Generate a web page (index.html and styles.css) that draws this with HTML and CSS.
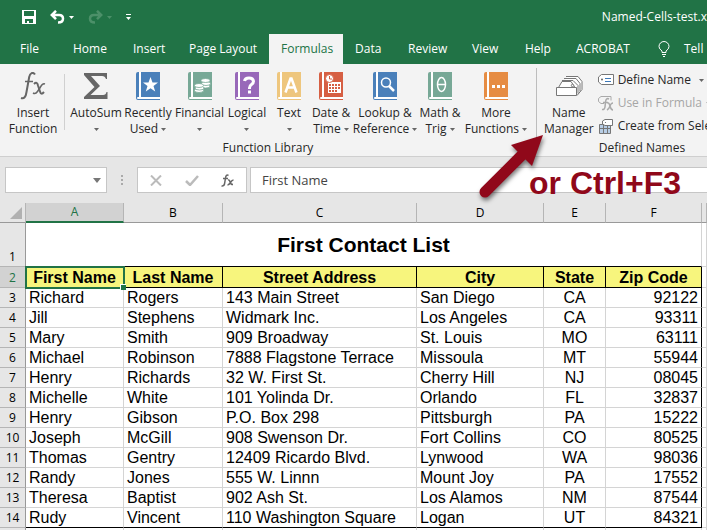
FILE: index.html
```html
<!DOCTYPE html>
<html lang="en">
<head>
<meta charset="utf-8">
<title>Named Cells</title>
<link rel="stylesheet" href="styles.css">
</head>
<body>
<svg class="defs" aria-hidden="true">
  <symbol id="book" viewBox="0 0 24 28">
    <path fill="#fff" d="M1 24h23v3H1z"/>
    <path fill="currentColor" d="M2 0h1v25H2q-1 0-1 1t1 1h22v1H2q-2 0-2-2V2q0-2 2-2zM5 0h19v25H5z"/>
    <path fill="#fff" d="M3 0h2v25H3z"/>
  </symbol>
  <symbol id="caret" viewBox="0 0 5 3"><path fill="currentColor" d="M0 0h5L2.500 3z"/></symbol>
</svg>
<div class="window">
  <header class="titlebar">
    <div class="quick">
      <button aria-label="Save"><svg width="14" height="14" viewBox="0 0 14 14"><path fill="#fff" fill-rule="evenodd" d="M0 0h14v14H0zM2 1v5h10V1zM3 9v4h2v-2h2v2h4V9z"/></svg></button>
      <button class="undo" aria-label="Undo"><svg width="15" height="14" viewBox="0 0 15 14"><path fill="none" stroke="#fff" stroke-width="2.500" d="M6 .8 1.800 5 6 9.200M2 5h7q4 0 4 3.800T8 12.500"/></svg><svg class="caret" width="5" height="3"><use href="#caret"/></svg></button>
      <button class="redo" aria-label="Redo" disabled><svg width="15" height="14" viewBox="0 0 15 14"><path fill="none" stroke="currentColor" stroke-width="2.500" d="M9 .8 13.200 5 9 9.200M13 5H6Q2 5 2 8.800T7 12.500"/></svg><svg class="caret" width="5" height="3"><use href="#caret"/></svg></button>
      <button aria-label="Customize Quick Access Toolbar"><svg width="5" height="6" viewBox="0 0 5 6"><path fill="#fff" d="M0 0h5v1H0zM0 3h5L2.500 6z"/></svg></button>
    </div>
    <span class="filename">Named-Cells-test.x</span>
  </header>
  <nav class="tabs">
    <a href="#">File</a><a href="#">Home</a><a href="#">Insert</a><a href="#">Page Layout</a><a href="#" class="active">Formulas</a><a href="#">Data</a><a href="#">Review</a><a href="#">View</a><a href="#">Help</a><a href="#">ACROBAT</a>
    <a href="#" class="tell"><svg width="12" height="16" viewBox="0 0 12 16"><path fill="none" stroke="#fff" d="M4 11.500V10Q1 8 1 5.500a5 5 0 0 1 10 0Q11 8 8 10v1.500zM4 13.500h4M5 15.500h2"/></svg>Tell</a>
  </nav>
  <section class="ribbon">
    <div class="group insert">
      <button class="tool"><svg width="26" height="28" viewBox="0 0 26 28"><g fill="none" stroke="#666"><path stroke-width="2" d="M15 2.500C13-.5 10 1 9.200 5L6.500 20Q5.500 27.500 1 26"/><path stroke-width="1.500" d="M5 9.500h8"/><path stroke-width="2" d="M14 12q3-3 4 1.500l2 6q1 4 4 .5"/><path stroke-width="1.500" d="M25 12q-2.500-1-4.500 3l-3 4.500q-2 3-4.500 1.500"/></g></svg><span>Insert<br>Function</span></button>
    </div>
    <div class="group library">
      <div class="tools">
        <button class="tool"><svg width="26" height="28" viewBox="0 0 26 28"><path fill="#666" d="M1 1h23v6h-1q-1-3-4-3H8l9 10-9.500 9H20q3 0 3.500-3h1v7H1v-2l10.500-10L1 3z"/></svg><span>AutoSum<br><svg class="caret" width="5" height="3"><use href="#caret"/></svg></span></button>
        <button class="tool blue"><svg width="24" height="28" viewBox="0 0 24 28"><use href="#book"/><path fill="#fff" d="m14.500 5 2 5.500h5.500l-4.500 3.500 1.700 5.500-4.700-3.300L9.800 19.500l1.700-5.500L7 10.500h5.500z"/></svg><span>Recently<br>Used <svg class="caret" width="5" height="3"><use href="#caret"/></svg></span></button>
        <button class="tool green"><svg width="24" height="28" viewBox="0 0 24 28"><use href="#book"/><g fill="#fff" stroke="#77a896" stroke-width=".8"><ellipse cx="17.500" cy="14" rx="4.500" ry="2"/><ellipse cx="18" cy="11.500" rx="4.500" ry="2"/><ellipse cx="17.500" cy="8.500" rx="4.500" ry="2"/><ellipse cx="11" cy="18.500" rx="4.500" ry="2"/><ellipse cx="11.500" cy="16" rx="4.500" ry="2"/><ellipse cx="11" cy="13.500" rx="4.500" ry="2"/></g></svg><span>Financial<br><svg class="caret" width="5" height="3"><use href="#caret"/></svg></span></button>
        <button class="tool purple"><svg width="24" height="28" viewBox="0 0 24 28"><use href="#book"/><path fill="none" stroke="#fff" stroke-width="3" d="M9.500 9Q10 6 14 6t4.500 3.200q0 2-2 3.300T14.500 16v1"/><path fill="#fff" d="M13 18.500h3v3h-3z"/></svg><span>Logical<br><svg class="caret" width="5" height="3"><use href="#caret"/></svg></span></button>
        <button class="tool gold"><svg width="24" height="28" viewBox="0 0 24 28"><use href="#book"/><path fill="none" stroke="#fff" stroke-width="2.500" d="m8.500 20.500 5-14h1l5 14M10 15.500h8"/></svg><span>Text<br><svg class="caret" width="5" height="3"><use href="#caret"/></svg></span></button>
        <button class="tool red"><svg width="24" height="28" viewBox="0 0 24 28"><use href="#book"/><path fill="#fff" d="M9 10h13v11H9z"/><path fill="#d65f43" d="M10 12h2v2h-2zm3 0h2v2h-2zm3 0h2v2h-2zm3 0h2v2h-2zM10 15h2v2h-2zm3 0h2v2h-2zm3 0h2v2h-2zm3 0h2v2h-2zM10 18h2v2h-2zm3 0h2v2h-2zm3 0h2v2h-2z"/><circle cx="10.500" cy="6.500" r="4" fill="#fff" stroke="#d65f43"/><path stroke="#d65f43" fill="none" d="M10.500 4v3H13"/></svg><span>Date &amp;<br>Time <svg class="caret" width="5" height="3"><use href="#caret"/></svg></span></button>
        <button class="tool blue"><svg width="24" height="28" viewBox="0 0 24 28"><use href="#book"/><g fill="none" stroke="#fff"><circle cx="13" cy="10.500" r="4.500" stroke-width="1.500"/><path stroke-width="2.500" d="m16 14 5 5"/></g></svg><span>Lookup &amp;<br>Reference <svg class="caret" width="5" height="3"><use href="#caret"/></svg></span></button>
        <button class="tool green"><svg width="24" height="28" viewBox="0 0 24 28"><use href="#book"/><g fill="none" stroke="#fff" stroke-width="1.500"><ellipse cx="13.500" cy="12.500" rx="4" ry="7"/><path d="M9.500 12.500h8"/></g></svg><span>Math &amp;<br>Trig <svg class="caret" width="5" height="3"><use href="#caret"/></svg></span></button>
        <button class="tool orange"><svg width="24" height="28" viewBox="0 0 24 28"><use href="#book"/><path fill="#fff" d="M8 13h3v3H8zm5 0h3v3h-3zm5 0h3v3h-3z"/></svg><span>More<br>Functions <svg class="caret" width="5" height="3"><use href="#caret"/></svg></span></button>
      </div>
      <div class="caption">Function Library</div>
    </div>
    <div class="group names">
      <div class="tools">
        <button class="tool"><svg width="28" height="28" viewBox="0 0 28 28"><g fill="#fff" stroke="#777"><path d="M11 4.500h12l4 5v8l-5 6"/><path d="M9 6.500h12l4 5v8"/><path d="M7 8.500h11l5 5v8"/><path d="M3.500 15.500 7 9.500h9l4 6"/><circle cx="17.500" cy="13.500" r="1.200"/><path d="M1.500 15.500h20v8h-20z"/></g></svg><span>Name<br>Manager</span></button>
        <div class="commands">
          <button><svg width="16" height="12" viewBox="0 0 16 12"><path fill="#fff" stroke="#777" d="M3.500.5h12v10h-12L.5 8V3z"/><circle cx="4" cy="5.500" r="1" fill="#666"/><path stroke="#3d78b8" d="M7 4.500h6M7 7.500h6"/></svg>Define Name<svg class="caret far" width="5" height="3"><use href="#caret"/></svg></button>
          <button disabled><svg width="16" height="15" viewBox="0 0 16 15"><g fill="none" stroke="#aaa"><path d="M6 7.500H3L.5 5.500v-3L3 .5h10v4"/><path stroke-width="1.500" d="M11 3Q8 1.500 7.500 6L7 11q-.5 3-3 2.500M5 6.500h5M9 7q2-1 3 3t3 4M15 7q-2 0-3 3t-3 4"/></g></svg>Use in Formula<svg class="caret" width="5" height="3"><use href="#caret"/></svg></button>
          <button><svg width="16" height="15" viewBox="0 0 16 15"><path fill="#b8cee6" stroke="#777" d="M1.500 5.500h11v9h-11zM1.500 9.500h11M5.500 5.500v9M9.500 5.500v9"/><path fill="#fff" stroke="#777" d="M7 .5h7.500v6H7L4.500 5V2z"/><circle cx="7.500" cy="3.500" r=".6" fill="#666"/></svg>Create from Sele</button>
        </div>
      </div>
      <div class="caption">Defined Names</div>
    </div>
  </section>
  <section class="formulabar">
    <div class="namebox"><input aria-label="Name Box"><svg width="8" height="5" viewBox="0 0 8 5"><path fill="currentColor" d="M0 0h8L4 5z"/></svg></div>
    <svg class="grip" width="2" height="10" viewBox="0 0 2 10"><path fill="#aaa" d="M0 0h2v2H0zM0 4h2v2H0zM0 8h2v2H0z"/></svg>
    <div class="actions">
      <button aria-label="Cancel"><svg width="12" height="11" viewBox="0 0 12 11"><path stroke="#bbb" stroke-width="2" d="m1 .5 10 10M11 .5l-10 10"/></svg></button>
      <button aria-label="Enter"><svg width="14" height="11" viewBox="0 0 14 11"><path fill="none" stroke="#bbb" stroke-width="2.500" d="m1 6 4 4 8-9"/></svg></button>
      <button aria-label="Insert Function"><svg width="13" height="13" viewBox="0 0 13 13"><g fill="none" stroke="#666" stroke-width="1.500"><path d="M7.500 1.500Q5 0 4.500 4L3.500 10Q3 12.500.5 12M2 4.500h5M7 6q1.500-.5 2 2t3 2.500M12.500 6Q11 6 9.500 8.500T6.500 11"/></g></svg></button>
    </div>
    <input class="formula" aria-label="Formula Bar" value="First Name">
  </section>
  <table class="sheet">
    <colgroup><col class="w-row"><col class="w-a"><col class="w-b"><col class="w-c"><col class="w-d"><col class="w-e"><col class="w-f"><col></colgroup>
    <thead><tr><th class="corner"><svg width="12" height="12" viewBox="0 0 12 12"><path fill="#b1b1b1" d="M12 0v12H0z"/></svg></th><th class="selected">A</th><th>B</th><th>C</th><th>D</th><th>E</th><th>F</th><th></th></tr></thead>
    <tbody>
      <tr class="title"><th>1</th><td colspan="6">First Contact List</td><td></td></tr>
      <tr class="fields"><th class="selected">2</th><td class="current">First Name<i class="handle"></i></td><td>Last Name</td><td>Street Address</td><td>City</td><td>State</td><td>Zip Code</td><td></td></tr>
      <tr><th>3</th><td>Richard</td><td>Rogers</td><td>143 Main Street</td><td>San Diego</td><td>CA</td><td>92122</td><td></td></tr>
      <tr><th>4</th><td>Jill</td><td>Stephens</td><td>Widmark Inc.</td><td>Los Angeles</td><td>CA</td><td>93311</td><td></td></tr>
      <tr><th>5</th><td>Mary</td><td>Smith</td><td>909 Broadway</td><td>St. Louis</td><td>MO</td><td>63111</td><td></td></tr>
      <tr><th>6</th><td>Michael</td><td>Robinson</td><td>7888 Flagstone Terrace</td><td>Missoula</td><td>MT</td><td>55944</td><td></td></tr>
      <tr><th>7</th><td>Henry</td><td>Richards</td><td>32 W. First St.</td><td>Cherry Hill</td><td>NJ</td><td>08045</td><td></td></tr>
      <tr><th>8</th><td>Michelle</td><td>White</td><td>101 Yolinda Dr.</td><td>Orlando</td><td>FL</td><td>32837</td><td></td></tr>
      <tr><th>9</th><td>Henry</td><td>Gibson</td><td>P.O. Box 298</td><td>Pittsburgh</td><td>PA</td><td>15222</td><td></td></tr>
      <tr><th>10</th><td>Joseph</td><td>McGill</td><td>908 Swenson Dr.</td><td>Fort Collins</td><td>CO</td><td>80525</td><td></td></tr>
      <tr><th>11</th><td>Thomas</td><td>Gentry</td><td>12409 Ricardo Blvd.</td><td>Lynwood</td><td>WA</td><td>98036</td><td></td></tr>
      <tr><th>12</th><td>Randy</td><td>Jones</td><td>555 W. Linnn</td><td>Mount Joy</td><td>PA</td><td>17552</td><td></td></tr>
      <tr><th>13</th><td>Theresa</td><td>Baptist</td><td>902 Ash St.</td><td>Los Alamos</td><td>NM</td><td>87544</td><td></td></tr>
      <tr class="last"><th>14</th><td>Rudy</td><td>Vincent</td><td>110 Washington Square</td><td>Logan</td><td>UT</td><td>84321</td><td></td></tr>
      <tr class="blank"><th></th><td></td><td></td><td></td><td></td><td></td><td></td><td></td></tr>
    </tbody>
  </table>
  <div class="callout">
    <svg width="72" height="72" viewBox="0 0 72 72"><path stroke="#90081a" stroke-width="11" stroke-linecap="round" d="M10 62 50 22"/><path fill="#90081a" d="M68 5 36 15l21 21z"/></svg>
    <strong>or Ctrl+F3</strong>
  </div>
</div>
</body>
</html>
```

FILE: styles.css
```css
* { box-sizing: border-box; }
html, body { height: 100%; }
body {
  margin: 0;
  overflow: hidden;
  background: #fff;
  color: #262626;
  font: 12px/16px "Open Sans", "Noto Sans", sans-serif;
}
button {
  margin: 0;
  padding: 0;
  border: 0;
  background: none;
  color: inherit;
  font: inherit;
}
input { font: inherit; color: #444; }
svg { display: block; flex: none; }
.defs { position: absolute; width: 0; height: 0; }
.window { position: relative; height: 100%; overflow: hidden; }
.caret { color: #666; }

.titlebar {
  display: flex;
  justify-content: space-between;
  align-items: center;
  height: 34px;
  padding-left: 22px;
  background: #217346;
  color: #fff;
}
.quick { display: flex; align-items: center; gap: 14px; }
.quick button { display: flex; align-items: center; gap: 4px; }
.quick .caret { color: inherit; }
.quick .undo { color: #fff; }
.quick .redo { color: #4c9069; }
.filename { flex: none; white-space: nowrap; }

.tabs {
  display: grid;
  grid-template-columns: 53px 60px 56px 92px 74px 53px 64px 53px 51px 82px 1fr;
  height: 30px;
  padding-left: 8px;
  background: #217346;
}
.tabs a {
  padding-left: 12px;
  color: #fff;
  line-height: 30px;
  text-decoration: none;
  white-space: nowrap;
}
.tabs .active { background: #f3f3f3; color: #217346; }
.tabs .tell { display: flex; align-items: center; gap: 14px; }

.ribbon {
  display: flex;
  height: 93px;
  border-bottom: 1px solid #cfcfcf;
  background: #f3f3f3;
}
.group { padding-top: 8px; white-space: nowrap; }
.tools { display: flex; }
.tool { display: flex; flex-direction: column; align-items: center; gap: 5px; }
.tool .caret { display: inline-block; vertical-align: middle; }
.insert {
  width: 65px;
  padding-left: 8px;
  background: linear-gradient(#d0d0d0, #d0d0d0) right 10px / 1px 56px no-repeat;
}
.insert .tool { width: 50px; }
.library {
  width: 472px;
  padding-left: 5px;
  background: linear-gradient(#bdbdbd, #bdbdbd) right 4px / 1px 70px no-repeat;
}
.library .tools {
  display: grid;
  grid-template-columns: 52px 52px 51px 44px 40px 44px 64px 46px 66px;
  justify-items: center;
  align-items: start;
}
.caption { padding-top: 3px; text-align: center; }
.library .caption { width: 396px; }
.names { flex: 1; min-width: 0; padding-left: 7px; }
.names .tool { width: 52px; }
.names .caption { width: 196px; }
.commands { display: flex; flex-direction: column; gap: 7px; padding-left: 4px; }
.commands button { display: flex; align-items: center; gap: 4px; height: 16px; }
.commands button:disabled { color: #a6a6a6; }
.commands button:disabled .caret { color: #a6a6a6; }
.commands .far { margin-left: 4px; }
.blue { color: #4a80ba; }
.green { color: #77a896; }
.purple { color: #9868b9; }
.gold { color: #eec67d; }
.red { color: #d65f43; }
.orange { color: #e68c43; }
.tool span { color: #262626; }

.formulabar {
  display: flex;
  align-items: center;
  height: 46px;
  padding: 0 0 0 5px;
  background: #e6e6e6;
}
.namebox, .actions, .formula { height: 26px; border: 1px solid #c6c6c6; background: #fff; }
.namebox { display: flex; align-items: center; width: 102px; padding-right: 5px; color: #777; }
.namebox input { flex: 1; min-width: 0; border: 0; background: none; }
.grip { margin: 0 14px; }
.actions { display: flex; align-items: center; justify-content: space-between; width: 110px; padding: 0 12px; }
.formula { flex: 1; min-width: 0; margin-left: 3px; padding: 0 11px; border-right: 0; font-size: 13px; }

.sheet {
  width: 100%;
  table-layout: fixed;
  border-collapse: separate;
  border-spacing: 0;
  color: #000;
  font: 16px/19px "Liberation Sans", Arial, sans-serif;
}
.w-row { width: 26px; }
.w-a { width: 98px; }
.w-b { width: 99px; }
.w-c { width: 194px; }
.w-d { width: 127px; }
.w-e { width: 62px; }
.w-f { width: 96px; }
.sheet td, .sheet th {
  height: 20px;
  padding: 0 3px;
  border: solid #d4d4d4;
  border-width: 0 1px 1px 0;
  overflow: hidden;
  white-space: nowrap;
}
.sheet th {
  border-color: #b5b5b5;
  background: #e6e6e6;
  font: 12px/19px "Open Sans", "Noto Sans", sans-serif;
}
.sheet thead th { border-bottom-color: #999; }
.sheet tbody th { border-right-color: #999; vertical-align: bottom; }
.sheet .corner svg { margin-left: 7px; }
.sheet .selected { background: #d2d2d2; color: #217346; }
.sheet thead .selected { border-bottom: 2px solid #217346; line-height: 18px; }
.sheet td:nth-child(6) { text-align: center; }
.sheet td:nth-child(7) { border-right-color: #000; text-align: right; }
.sheet .title td { height: 44px; font-size: 21px; font-weight: bold; text-align: center; }
.sheet .title td:nth-child(2), .sheet .last td:not(:last-child) { border-bottom-color: #000; }
.sheet .fields td { height: 21px; font-weight: bold; text-align: center; }
.sheet .fields td:not(:last-child) { border-color: #000; background: #f7f57d; }
.sheet .fields .current { position: relative; overflow: visible; outline: 2px solid #217346; outline-offset: -1px; }
.handle {
  position: absolute;
  right: -3px;
  bottom: -3px;
  width: 6px;
  height: 6px;
  border: solid #fff;
  border-width: 1px 0 0 1px;
  background: #217346;
}
.sheet .blank td:nth-child(7) { border-right-color: #d4d4d4; }

.callout {
  position: absolute;
  top: 130px;
  left: 475px;
  display: flex;
  align-items: flex-end;
  color: #90081a;
  font: 32px/38px "Liberation Sans", Arial, sans-serif;
  pointer-events: none;
}
.callout svg { filter: drop-shadow(1px 3px 2px rgba(0, 0, 0, .5)); }
.callout strong { margin-left: -18px; white-space: nowrap; }
```
